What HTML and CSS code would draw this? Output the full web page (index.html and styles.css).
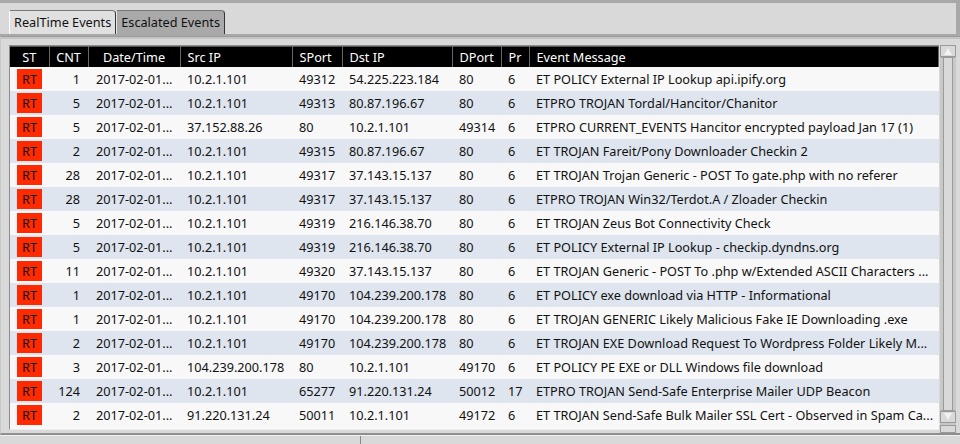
FILE: index.html
```html
<!DOCTYPE html>
<html lang="en">
<head>
  <meta charset="UTF-8" />
  <title>Events</title>
  <link rel="stylesheet" href="styles.css">
</head>
<body>
  <div class="window">
    <div class="tabbar">
      <div class="tab active">RealTime Events</div>
      <div class="tab">Escalated Events</div>
    </div>
    <div class="panel">
      <div class="frame">
        <div class="grid">
          <table id="events">
            <colgroup>
              <col style="width:39px"><col style="width:39px"><col style="width:92px">
              <col style="width:112px"><col style="width:50px"><col style="width:110px">
              <col style="width:49px"><col style="width:28px"><col>
            </colgroup>
            <thead>
              <tr>
                <th class="c">ST</th>
                <th class="c">CNT</th>
                <th class="c">Date/Time</th>
                <th>Src IP</th>
                <th>SPort</th>
                <th>Dst IP</th>
                <th>DPort</th>
                <th>Pr</th>
                <th>Event Message</th>
              </tr>
            </thead>
            <tbody></tbody>
          </table>
        </div>
        <div class="scrollbar">
          <div class="arrow up"></div>
          <div class="track"></div>
          <div class="arrow down"></div>
          <div class="corner"></div>
        </div>
      </div>
    </div>
    <div class="statusbar">
      <div class="status-cell wide"></div>
      <div class="status-cell"></div>
    </div>
  </div>

  <script>
    const events = [
      [1, '10.2.1.101', '49312', '54.225.223.184', '80', '6', 'ET POLICY External IP Lookup api.ipify.org'],
      [5, '10.2.1.101', '49313', '80.87.196.67', '80', '6', 'ETPRO TROJAN Tordal/Hancitor/Chanitor'],
      [5, '37.152.88.26', '80', '10.2.1.101', '49314', '6', 'ETPRO CURRENT_EVENTS Hancitor encrypted payload Jan 17 (1)'],
      [2, '10.2.1.101', '49315', '80.87.196.67', '80', '6', 'ET TROJAN Fareit/Pony Downloader Checkin 2'],
      [28, '10.2.1.101', '49317', '37.143.15.137', '80', '6', 'ET TROJAN Trojan Generic - POST To gate.php with no referer'],
      [28, '10.2.1.101', '49317', '37.143.15.137', '80', '6', 'ETPRO TROJAN Win32/Terdot.A / Zloader Checkin'],
      [5, '10.2.1.101', '49319', '216.146.38.70', '80', '6', 'ET TROJAN Zeus Bot Connectivity Check'],
      [5, '10.2.1.101', '49319', '216.146.38.70', '80', '6', 'ET POLICY External IP Lookup - checkip.dyndns.org'],
      [11, '10.2.1.101', '49320', '37.143.15.137', '80', '6', 'ET TROJAN Generic - POST To .php w/Extended ASCII Characters ...'],
      [1, '10.2.1.101', '49170', '104.239.200.178', '80', '6', 'ET POLICY exe download via HTTP - Informational'],
      [1, '10.2.1.101', '49170', '104.239.200.178', '80', '6', 'ET TROJAN GENERIC Likely Malicious Fake IE Downloading .exe'],
      [2, '10.2.1.101', '49170', '104.239.200.178', '80', '6', 'ET TROJAN EXE Download Request To Wordpress Folder Likely M...'],
      [3, '104.239.200.178', '80', '10.2.1.101', '49170', '6', 'ET POLICY PE EXE or DLL Windows file download'],
      [124, '10.2.1.101', '65277', '91.220.131.24', '50012', '17', 'ETPRO TROJAN Send-Safe Enterprise Mailer UDP Beacon'],
      [2, '91.220.131.24', '50011', '10.2.1.101', '49172', '6', 'ET TROJAN Send-Safe Bulk Mailer SSL Cert - Observed in Spam Ca...']
    ];

    const tbody = document.querySelector('#events tbody');

    events.forEach(ev => {
      const [cnt, src, sport, dst, dport, pr, msg] = ev;
      const row = document.createElement('tr');
      row.innerHTML =
        '<td class="c"><span class="badge">RT</span></td>' +
        `<td class="r">${cnt}</td>` +
        '<td class="date">2017-02-01...</td>' +
        `<td>${src}</td><td>${sport}</td><td>${dst}</td>` +
        `<td>${dport}</td><td>${pr}</td><td>${msg}</td>`;
      tbody.appendChild(row);
    });
  </script>
</body>
</html>
```

FILE: styles.css
```css
html, body {
  margin: 0;
  padding: 0;
}
body {
  width: 960px;
  height: 444px;
  overflow: hidden;
  background-color: #a8a8a8;
  font-family: "Noto Sans", sans-serif;
  font-size: 12.7px;
  color: #111;
}
.window {
  padding-top: 3px;
}
.tabbar {
  height: 31px;
  margin-right: 4px;
  background-color: #d9d9d9;
  display: flex;
  align-items: flex-end;
  padding-left: 9px;
  box-sizing: border-box;
}
.tab {
  height: 24px;
  padding: 0 4px 0 4px;
  line-height: 23px;
  box-sizing: border-box;
  background-color: #a9a9a9;
  border-top: 1px solid #777;
  border-left: 1px solid #e6e6e6;
  border-right: 1px solid #333;
  border-top-right-radius: 4px;
  color: #111;
}
.tab.active {
  background-color: #e0e0e0;
  border-left-color: #fff;
}
.panel {
  background-color: #d9d9d9;
  border-top: 1px solid #9c9c9c;
  margin-top: 2px;
  padding: 8px 4px 0 8px;
  height: 399px;
  box-sizing: border-box;
  box-shadow: inset 0 2px 0 #c4c4c4;
  border-left: 1px solid #c8c8c8;
  border-bottom: 2px solid #8f8f8f;
}
.frame {
  display: flex;
  gap: 1px;
  height: 388px;
}
.grid {
  width: 930px;
  height: 383px;
  background-color: #f8f8f8;
  border-top: 1px solid #8c8c8c;
  border-left: 1px solid #8c8c8c;
  border-bottom: 1px solid #eee;
  overflow: hidden;
}
table {
  border-collapse: collapse;
  table-layout: fixed;
  width: 929px;
}
th {
  background-color: #000;
  color: #fff;
  font-weight: normal;
  height: 20px;
  padding: 0 0 0 7px;
  text-align: left;
  border-right: 1px solid #666;
  border-top: 1px solid #555;
  white-space: nowrap;
}
th.c {
  text-align: center;
  padding: 0;
}
td {
  height: 24px;
  padding: 0 0 0 7px;
  white-space: nowrap;
  overflow: hidden;
}
td.c {
  text-align: center;
  padding: 0;
}
td.r {
  text-align: right;
  padding: 0 8px 0 0;
}
td.date {
  padding-left: 8px;
}
tbody tr:nth-child(even) {
  background-color: #dee5ee;
}
.badge {
  display: inline-block;
  width: 25px;
  height: 20px;
  line-height: 20px;
  background-color: #ff2a00;
  color: #111;
  vertical-align: middle;
}
.scrollbar {
  width: 16px;
  display: flex;
  flex-direction: column;
  background-color: #c8c8c8;
}
.arrow {
  height: 12px;
  background-color: #d9d9d9;
  border: 1px solid #9a9a9a;
  box-sizing: border-box;
  position: relative;
}
.arrow::after {
  content: "";
  position: absolute;
  left: 3px;
  border-left: 4px solid transparent;
  border-right: 4px solid transparent;
}
.arrow.up::after {
  top: 2px;
  border-bottom: 7px solid #f2f2f2;
}
.arrow.down::after {
  top: 1px;
  border-top: 7px solid #f2f2f2;
}
.track {
  flex: 1;
  background-color: #d9d9d9;
  border: 1px solid #9a9a9a;
  border-left-width: 3px;
  border-right-width: 3px;
  border-left-color: #c8c8c8;
  border-right-color: #c8c8c8;
  box-shadow: inset 1px 0 #9a9a9a, inset -1px 0 #9a9a9a;
}
.corner {
  height: 8px;
  margin-top: 2px;
  background-color: #d9d9d9;
  border: 1px solid #9a9a9a;
  box-sizing: border-box;
}
.statusbar {
  display: flex;
  height: 10px;
  background-color: #d9d9d9;
  border-top: 1px solid #f0f0f0;
}
.status-cell {
  flex: 1;
  border-left: 1px solid #888;
}
.status-cell.wide {
  flex: 0 0 360px;
  border-left: none;
}
```
